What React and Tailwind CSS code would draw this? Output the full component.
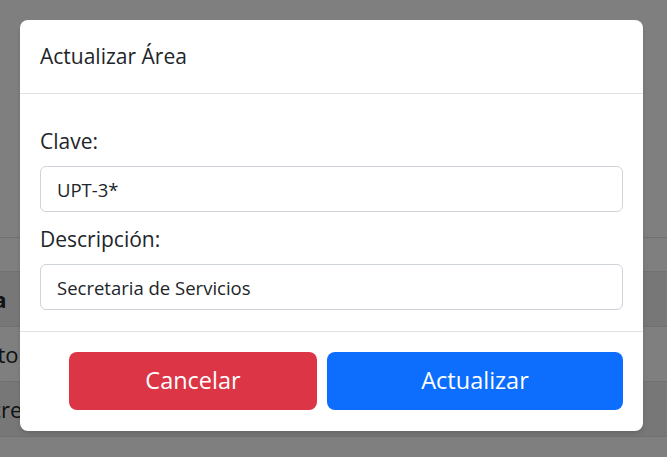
import React from "react";

const filas = [
  { texto: "Director General", rayada: false, margen: "ml-[-56px] self-center" },
  { texto: "Secretaria de Servicios", rayada: true, margen: "ml-[-34px] self-center" },
  { texto: "Unidad de Contabilidad", rayada: false, margen: "ml-[40px] self-start mt-[13px]" },
];

function Fondo() {
  return (
    <div className="pt-[237px]">
      <div className="border-t border-[#dee2e6]">
        <div className="h-[34px] border-b border-[#dee2e6]" />
        {/* Encabezado de la tabla */}
        <div className="flex h-[55px] items-center border-b border-[#dee2e6] bg-[#efefef]">
          <span className="ml-[-45px] text-[22px] font-bold text-[#212529]">Área</span>
        </div>
        {filas.map((fila, i) => (
          <div
            key={i}
            className={
              "flex h-[55px] border-b border-[#dee2e6] " +
              (fila.rayada ? "bg-[#efefef]" : "bg-white")
            }
          >
            <span className={"whitespace-nowrap text-[22px] text-[#212529] " + fila.margen}>
              {fila.texto}
            </span>
          </div>
        ))}
      </div>
    </div>
  );
}

export default function App() {
  return (
    <div className="relative h-[457px] w-[667px] overflow-hidden bg-white font-['Open_Sans',sans-serif]">
      <Fondo />
      <div className="absolute inset-0 bg-black/50" />

      {/* Modal */}
      <div className="absolute left-[20px] top-[20px] w-[623px] rounded-lg bg-white text-[#212529] shadow-md">
        <div className="flex h-[74px] items-center border-b border-[#dee2e6] px-5">
          <h5 className="text-[21px]">Actualizar Área</h5>
        </div>

        <div className="px-5 pt-[32px] pb-[21px]">
          <label className="block h-[30px] text-[21px] leading-[30px]">Clave:</label>
          <input
            className="mt-[10px] block h-[46px] w-full rounded-md border border-[#ced4da] px-4 text-[18.5px] text-[#212529] outline-none"
            defaultValue="UPT-3*"
          />
          <label className="mt-[12px] block h-[30px] text-[21px] leading-[30px]">Descripción:</label>
          <input
            className="mt-[10px] block h-[46px] w-full rounded-md border border-[#ced4da] px-4 text-[18.5px] text-[#212529] outline-none"
            defaultValue="Secretaria de Servicios"
          />
        </div>

        <div className="flex justify-end gap-[10px] border-t border-[#dee2e6] px-5 pt-[20px] pb-[21px]">
          <button className="h-[58px] w-[248px] rounded-lg bg-[#dc3545] text-[23.5px] text-white">
            Cancelar
          </button>
          <button className="h-[58px] w-[296px] rounded-lg bg-[#0d6efd] text-[23.5px] text-white">
            Actualizar
          </button>
        </div>
      </div>
    </div>
  );
}
